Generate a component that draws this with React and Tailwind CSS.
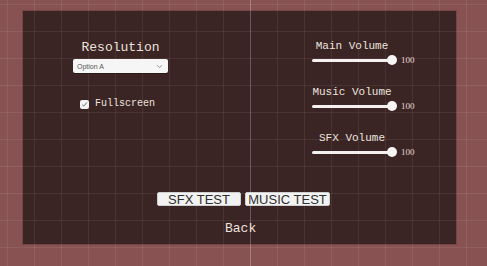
// Settings menu, Unity scene-view look: grid backdrop, dark panel, sliders.

const grid =
  'bg-[linear-gradient(to_right,rgba(255,255,255,0.07)_1px,transparent_1px),linear-gradient(to_bottom,rgba(255,255,255,0.07)_1px,transparent_1px)] bg-[length:27px_27px]';

const mono = "font-['Liberation_Mono',monospace] text-[#ece3df]";

function VolumeSlider({ label }) {
  return (
    <div className="flex flex-col">
      <div className={`${mono} w-[80px] flex justify-center whitespace-nowrap text-[11px] leading-[14px]`}>
        {label}
      </div>
      <div className="flex items-center mt-[2px]">
        <div className="relative w-[85px] h-[10px] flex items-center">
          <div className="w-[80px] h-[3px] rounded-full bg-[#f4f1f0]" />
          <div className="absolute right-0 top-0 w-[10px] h-[10px] rounded-full bg-[#f7f5f4]" />
        </div>
        <span className="ml-[4px] font-['Liberation_Serif',serif] text-[9px] leading-none text-[#e6dcd8]">100</span>
      </div>
    </div>
  );
}

function TestButton({ children, w }) {
  return (
    <button
      className={`${w} h-[14px] flex items-center justify-center rounded-[2px] bg-[#f2f2f2] border border-[#cfcfcf] font-['Liberation_Sans',Arial,sans-serif] text-[13px] leading-none text-[#2e2e2e]`}
    >
      {children}
    </button>
  );
}

export default function App() {
  return (
    <div className={`relative w-[487px] h-[266px] overflow-hidden bg-[#895252] ${grid} bg-[position:7px_4px] pt-[11px] pl-[23px]`}>
      <div className={`w-[433px] h-[233px] bg-[#3b2424] ${grid} bg-[position:11px_20px] flex flex-col shadow-[0_0_0_1px_rgba(0,0,0,0.15)]`}>
        <div className="h-[181px] flex">
          {/* left column */}
          <div className="ml-[50px] w-[95px] pt-[29px] flex flex-col items-center">
            <div className={`${mono} text-[13px] leading-[16px]`}>Resolution</div>
            <div className="mt-[3px] w-[95px] h-[14px] rounded-[2px] bg-[#f6f6f6] shadow-[0_1px_1px_rgba(0,0,0,0.3)] flex items-center justify-between px-[4px]">
              <span className="font-['Liberation_Sans',Arial,sans-serif] text-[7px] leading-none text-[#555]">Option A</span>
              <svg width="7" height="5" viewBox="0 0 7 5" className="mr-[1px]">
                <path d="M1 1.2 L3.5 3.6 L6 1.2" fill="none" stroke="#8a8a8a" strokeWidth="0.9" />
              </svg>
            </div>
            <div className="self-start ml-[7px] mt-[25px] flex items-center">
              <div className="w-[9px] h-[9px] rounded-[2px] bg-[#f3f3f3] flex items-center justify-center">
                <svg width="7" height="7" viewBox="0 0 7 7">
                  <path d="M1.2 3.6 L2.9 5.2 L5.9 1.4" fill="none" stroke="#6a6a6a" strokeWidth="0.9" />
                </svg>
              </div>
              <span className={`${mono} ml-[6px] text-[10px] leading-[12px]`}>Fullscreen</span>
            </div>
          </div>

          {/* right column */}
          <div className="ml-[144px] pt-[28px] flex flex-col gap-[20px]">
            <VolumeSlider label="Main Volume" />
            <VolumeSlider label="Music Volume" />
            <VolumeSlider label="SFX Volume" />
          </div>
        </div>

        <div className="ml-[134px] flex gap-[4px]">
          <TestButton w="w-[84px]">SFX TEST</TestButton>
          <TestButton w="w-[85px]">MUSIC TEST</TestButton>
        </div>

        <div className={`${mono} ml-[202px] mt-[15px] text-[13px] leading-[16px]`}>Back</div>
      </div>

      {/* scene-view centre axis */}
      <div className="absolute top-0 left-[250px] w-px h-full bg-[rgba(255,255,255,0.2)]" />
    </div>
  );
}
